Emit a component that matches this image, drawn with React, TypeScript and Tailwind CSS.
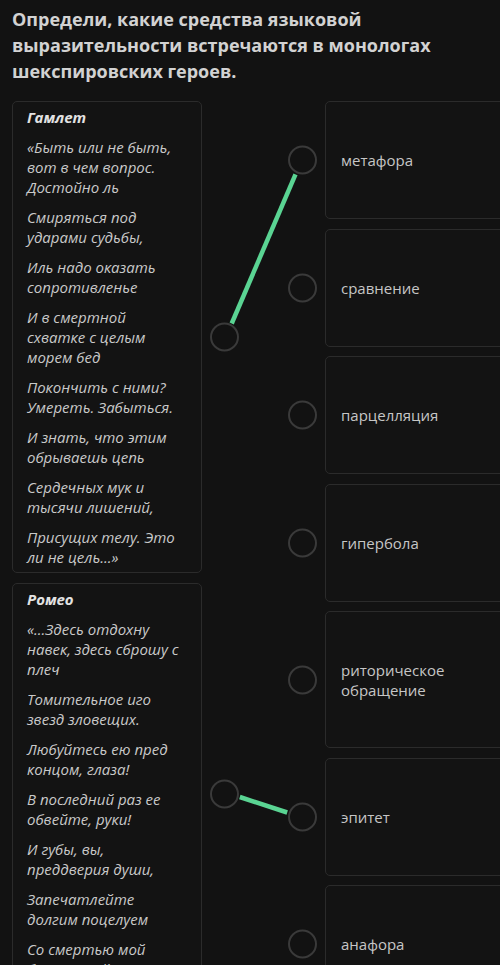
import React from "react";

const hamlet = [
  ["«Быть или не быть,", "вот в чем вопрос.", "Достойно ль"],
  ["Смиряться под", "ударами судьбы,"],
  ["Иль надо оказать", "сопротивленье"],
  ["И в смертной", "схватке с целым", "морем бед"],
  ["Покончить с ними?", "Умереть. Забыться."],
  ["И знать, что этим", "обрываешь цепь"],
  ["Сердечных мук и", "тысячи лишений,"],
  ["Присущих телу. Это", "ли не цель...»"],
];

const romeo = [
  ["«...Здесь отдохну", "навек, здесь сброшу с", "плеч"],
  ["Томительное иго", "звезд зловещих."],
  ["Любуйтесь ею пред", "концом, глаза!"],
  ["В последний раз ее", "обвейте, руки!"],
  ["И губы, вы,", "преддверия души,"],
  ["Запечатлейте", "долгим поцелуем"],
  ["Со смертью мой", "бессрочный", "договор!»"],
];

const answers: { text: string[]; tall?: boolean }[] = [
  { text: ["метафора"] },
  { text: ["сравнение"] },
  { text: ["парцелляция"] },
  { text: ["гипербола"] },
  { text: ["риторическое", "обращение"], tall: true },
  { text: ["эпитет"] },
  { text: ["анафора"] },
];

function Circle({ side }: { side: "left" | "right" }) {
  return (
    <div
      className={
        side === "left"
          ? "absolute left-[calc(100%+9px)] top-1/2 -translate-y-1/2 w-[29px] h-[29px] rounded-full border-[2.5px] border-[#3a3a3a]"
          : "absolute right-[calc(100%+9px)] top-1/2 -translate-y-1/2 w-[29px] h-[29px] rounded-full border-[2.5px] border-[#3a3a3a]"
      }
    />
  );
}

function LeftCard({ title, paras }: { title: string; paras: string[][] }) {
  return (
    <div className="relative rounded-[5px] border border-[#2b2b2b] bg-[#131313] px-[14px] pt-[5px] pb-[5px] flex flex-col gap-[10px]">
      <div className="text-[15px] leading-[20px] font-bold italic text-[#e2e2e2]">{title}</div>
      {paras.map((p, i) => (
        <div key={i} className="text-[15px] leading-[20px] italic text-[#c9c9c9]">
          {p.map((l, j) => (
            <div key={j}>{l}</div>
          ))}
        </div>
      ))}
      <Circle side="left" />
    </div>
  );
}

export default function App() {
  return (
    <div className="min-h-screen w-[500px] overflow-hidden bg-[#121212] font-['Open_Sans',sans-serif]">
      <div className="px-3 pt-[6px]">
        <h1 className="text-[18px] leading-[26px] font-bold text-[#d2d2d2]">
          Определи, какие средства языковой выразительности встречаются в монологах шекспировских героев.
        </h1>
        <div className="relative mt-[17px] flex items-start">
          <div className="w-[190px] shrink-0 flex flex-col gap-[10px]">
            <LeftCard title="Гамлет" paras={hamlet} />
            <LeftCard title="Ромео" paras={romeo} />
          </div>
          <div className="ml-[123px] w-[200px] shrink-0 flex flex-col gap-[9.5px]">
            {answers.map((a, i) => (
              <div
                key={i}
                className={
                  (a.tall ? "h-[137px] " : "h-[118px] ") +
                  "relative rounded-[5px] border border-[#2b2b2b] bg-[#131313] pl-[15px] flex items-center"
                }
              >
                <div className="text-[15px] leading-[20px] text-[#c6c6c6]">
                  {a.text.map((t, j) => (
                    <div key={j}>{t}</div>
                  ))}
                </div>
                <Circle side="right" />
              </div>
            ))}
          </div>
          <svg
            className="pointer-events-none absolute left-0 top-0"
            width="488"
            height="900"
            viewBox="0 0 488 900"
          >
            <line x1={219.7} y1={222.5} x2={283.5} y2={73.3} stroke="#5ad493" strokeWidth={4.5} />
            <line x1={227.8} y1={696} x2={275.2} y2={711.5} stroke="#5ad493" strokeWidth={4.5} />
          </svg>
        </div>
      </div>
    </div>
  );
}
